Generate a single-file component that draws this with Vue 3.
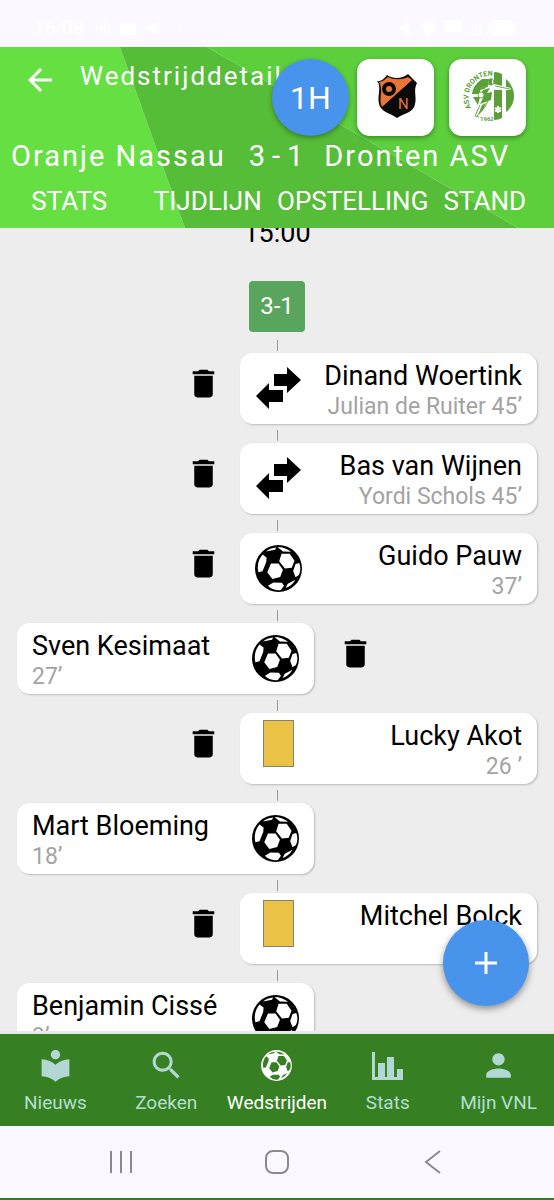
<script setup>
const tabs = ['STATS', 'TIJDLIJN', 'OPSTELLING', 'STAND']

const events = [
  { side: 'away', icon: 'swap', name: 'Dinand Woertink', detail: 'Julian de Ruiter 45’', removable: true },
  { side: 'away', icon: 'swap', name: 'Bas van Wijnen', detail: 'Yordi Schols 45’', removable: true },
  { side: 'away', icon: 'ball', name: 'Guido Pauw', detail: '37’', removable: true },
  { side: 'home', icon: 'ball', name: 'Sven Kesimaat', detail: '27’', removable: true },
  { side: 'away', icon: 'yellow', name: 'Lucky Akot', detail: '26 ’', removable: true },
  { side: 'home', icon: 'ball', name: 'Mart Bloeming', detail: '18’', removable: false },
  { side: 'away', icon: 'yellow', name: 'Mitchel Bolck', detail: '', removable: true },
  { side: 'home', icon: 'ball', name: 'Benjamin Cissé', detail: '9’', removable: false },
]

const ballPanels =
  'M47 54L69 54L82 73L74 94L51 100L36 80Z M78 26L102 26L116 46L108 67L88 69L71 48Z M32 19Q44 8 62 7L59 14Z M66 6Q88 6 106 20L82 19Z M22 28L34 37L33 50L22 77L10 80Q3 52 22 28Z M38 120L54 110L79 111L85 120L76 132Q54 136 38 120Z M119 56L130 53Q137 72 129 88L119 95L112 76Z M90 126L96 114L119 102Q108 120 90 126Z'

const destinations = [
  { label: 'Nieuws', icon: 'news' },
  { label: 'Zoeken', icon: 'search' },
  { label: 'Wedstrijden', icon: 'ball', active: true },
  { label: 'Stats', icon: 'stats' },
  { label: 'Mijn VNL', icon: 'person' },
]
</script>

<template>
  <div class="screen">
    <div class="status">
      <span class="clock">16:08</span>
      <svg class="status-left" viewBox="0 0 90 20" aria-hidden="true">
        <g fill="none" stroke="#fff" stroke-width="2"><path d="M2 8v4M6 5v10M10 3v14M14 6v8" /></g>
        <path d="M25 4h16v13H25zM48 11L66 3L62 17L56 13Z" fill="#fff" /><circle cx="84" cy="10" r="2" fill="#fff" />
      </svg>
      <svg class="status-right" viewBox="0 0 120 20" aria-hidden="true">
        <g fill="#fff"><path d="M2 7h4l6-5v16l-6-5H2zM31 2a6 6 0 0 0-6 6c0 5 6 11 6 11s6-6 6-11a6 6 0 0 0-6-6zM46 2h17v12H46zM69 14h2v4h-2zM73 11h2v7h-2zM77 7h2v11h-2zM81 3h2v15h-2z" /><rect x="90" y="2" width="28" height="16" rx="8" /></g>
      </svg>
    </div>

    <header class="header">
      <svg class="facets" viewBox="0 0 554 181" preserveAspectRatio="none" aria-hidden="true">
        <path d="M0 0H120L185 181H0Z" fill="#66df43" />
        <path d="M120 0H207L518 181H185Z" fill="#56bd38" />
        <path d="M207 0H554V181H518Z" fill="#5dcf3c" />
      </svg>
      <div class="bar">
        <button class="back" type="button" aria-label="Terug">
          <svg viewBox="0 0 24 24" width="36" height="36"><path d="M20 11H7.83l5.59-5.59L12 4l-8 8 8 8 1.41-1.41L7.83 13H20v-2z" fill="#fff" /></svg>
        </button>
        <h1>Wedstrijddetails</h1>
        <div class="actions">
          <button class="half" type="button">1H</button>
          <button class="crest" type="button" aria-label="Oranje Nassau">
            <svg viewBox="0 0 77 77" width="77" height="77">
              <path d="M20 22C24 23 28 19 30 16C36 20 45 20 51 15L60 24C56 31 60 38 58 45C57 53 48 54 40 59C33 54 24 53 22 45C20 36 25 28 20 22Z" fill="#090909" />
              <path d="M22 23C26 23 29 19 31 18C37 21 45 21 51 18L55 21L25 48C21 40 27 31 22 23Z" fill="#e87535" />
              <circle cx="32" cy="30" r="5" fill="none" stroke="#090909" stroke-width="4" />
              <text x="41" y="50" class="crest-n">N</text>
            </svg>
          </button>
          <button class="crest" type="button" aria-label="Dronten ASV">
            <svg viewBox="0 0 77 77" width="77" height="77">
              <defs><path id="crest-arc" d="M22 49A22 22 0 0 1 45 17" /></defs>
              <path d="M45 13Q50 13 53 15V59Q49 61 45 61ZM57 20Q65 27 65 37T57 53Z" fill="#5a9f38" />
              <path d="M23 35Q24 26 33 20L40 20L39 29L31 31L32 35ZM40 20L43 19V27L40 26ZM24 38H31L29 46Z" fill="#5a9f38" />
              <path d="M36 29L45 25L62 29L61 31L45 31L43 39L35 41L33 35Z" fill="#fff" />
              <path d="M34 31L41 29L38 34L43 33L42 41L31 45L34 39L31 37ZM33 46L37 44L34 51L29 56Z" fill="#5a9f38" />
              <g fill="none" stroke="#6ca94d" stroke-width="1"><circle cx="42" cy="23" r="3" /><circle cx="32" cy="36" r="3" fill="#fff" /><path d="M39 27L31 29M46 27L61 30M39 42L36 48L28 57M31 46L26 57L30 58" /></g>
              <path d="M49 47V54M46 49L52 52M46 52L52 49" stroke="#fff" stroke-width="2" />
              <text class="crest-ring"><textPath href="#crest-arc">ASV DRONTEN</textPath></text>
              <text x="31" y="62" class="crest-year">1962</text>
            </svg>
          </button>
        </div>
      </div>
      <div class="match"><span>Oranje Nassau</span><span class="score"><b>3</b><b>-</b><b>1</b></span><span>Dronten ASV</span></div>
      <nav class="tabs">
        <button v-for="t in tabs" :key="t" type="button">{{ t }}</button>
      </nav>
    </header>

    <div class="body">
      <main class="timeline">
        <p class="time">15:00</p>
        <p class="result">3-1</p>
        <ol>
          <li v-for="e in events" :key="e.name" :class="e.side">
            <article class="card">
              <svg v-if="e.icon === 'swap'" class="mark" viewBox="0 0 47 47" aria-hidden="true">
                <path d="M19 9H32V2L46 15L32 28V21H19ZM28 25H14V18L1 31L14 44V37H28Z" fill="#000" />
              </svg>
              <svg v-else-if="e.icon === 'ball'" class="mark" viewBox="0 0 138 138" aria-hidden="true">
                <circle cx="69" cy="69" r="69" fill="#000" /><path :d="ballPanels" fill="#fff" />
              </svg>
              <span v-else class="mark booking"><i></i></span>
              <div class="copy">
                <h2>{{ e.name }}</h2>
                <p>{{ e.detail }}</p>
              </div>
            </article>
            <button v-if="e.removable" class="trash" type="button" :aria-label="'Verwijder ' + e.name">
              <svg viewBox="0 0 24 24" width="37" height="37"><path d="M6 19c0 1.1.9 2 2 2h8c1.1 0 2-.9 2-2V7H6v12zM19 4h-3.5l-1-1h-5l-1 1H5v2h14V4z" /></svg>
            </button>
          </li>
        </ol>
      </main>
      <button class="fab" type="button" aria-label="Toevoegen">
        <svg viewBox="0 0 22 22" width="22" height="22"><path d="M11 0V22M0 11H22" stroke="#fff" stroke-width="3" /></svg>
      </button>
    </div>

    <nav class="bottom">
      <button v-for="d in destinations" :key="d.label" type="button" :class="{ active: d.active }">
        <svg v-if="d.icon === 'news'" viewBox="0 0 24 24" width="37" height="37"><path d="M12 11.55C9.64 9.35 6.48 8 3 8v11c3.48 0 6.64 1.35 9 3.55 2.36-2.19 5.52-3.55 9-3.55V8c-3.48 0-6.64 1.35-9 3.55zM12 8c1.66 0 3-1.34 3-3s-1.34-3-3-3-3 1.34-3 3 1.34 3 3 3z" /></svg>
        <svg v-else-if="d.icon === 'search'" viewBox="0 0 24 24" width="37" height="37"><path d="M15.5 14h-.79l-.28-.27C15.41 12.59 16 11.11 16 9.5 16 5.91 13.09 3 9.5 3S3 5.91 3 9.5 5.91 16 9.5 16c1.61 0 3.09-.59 4.23-1.57l.27.28v.79l5 4.99L20.49 19l-4.99-5zm-6 0C7.01 14 5 11.99 5 9.5S7.01 5 9.5 5 14 7.01 14 9.5 11.99 14 9.5 14z" /></svg>
        <svg v-else-if="d.icon === 'ball'" viewBox="-14 -14 166 166" width="37" height="37"><circle cx="69" cy="69" r="69" /><path :d="ballPanels" class="cut" /></svg>
        <svg v-else-if="d.icon === 'stats'" viewBox="0 0 37 37" width="37" height="37"><path d="M3 5H6V30H9V16H16V30H18V10H25V30H28V22H34V33H3Z" /></svg>
        <svg v-else viewBox="0 0 24 24" width="37" height="37"><path d="M12 12c2.21 0 4-1.79 4-4s-1.79-4-4-4-4 1.79-4 4 1.79 4 4 4zm0 2c-2.67 0-8 1.34-8 4v2h16v-2c0-2.66-5.33-4-8-4z" /></svg>
        <span>{{ d.label }}</span>
      </button>
    </nav>

    <div class="system">
      <button type="button" aria-label="Recente apps"><svg viewBox="0 0 26 26" width="26" height="26"><path d="M3 2V24M13 2V24M23 2V24" /></svg></button>
      <button type="button" aria-label="Startscherm"><svg viewBox="0 0 26 26" width="26" height="26"><rect x="2" y="2" width="22" height="22" rx="7" /></svg></button>
      <button type="button" aria-label="Vorige"><svg viewBox="0 0 26 26" width="26" height="26"><path d="M20 2L6 13L20 24" /></svg></button>
    </div>
  </div>
</template>

<style>
body { background: #ededed; }
</style>

<style scoped>
* { box-sizing: border-box; margin: 0; padding: 0; }
.screen { display: flex; flex-direction: column; height: 100vh; overflow: hidden; font-family: Roboto, "Liberation Sans", sans-serif; color: #000; background: #ededed; border-bottom: 2px solid #367c22; }
button { font: inherit; color: inherit; background: none; border: 0; }
svg { display: block; flex: none; }

.status { display: flex; align-items: center; height: 47px; padding: 8px 36px 0 33px; background: #fcf8ff; color: #fff; }
.clock { font-size: 20px; font-weight: 700; }
.status-left { width: 90px; height: 20px; margin-left: 10px; }
.status-right { width: 120px; height: 20px; margin-left: auto; }

.header { position: relative; flex: none; color: #fff; }
.facets { position: absolute; inset: 0; width: 100%; height: 100%; }
.bar { position: relative; display: flex; align-items: flex-start; padding: 12px 28px 0 22px; }
.back { margin-top: 3px; }
.bar h1 { flex: 1; min-width: 0; margin-left: 22px; font-size: 26px; font-weight: 400; line-height: 34px; letter-spacing: 2px; white-space: nowrap; }
.actions { display: flex; gap: 15px; position: relative; }
.half { width: 77px; height: 77px; margin-right: -7px; border-radius: 50%; background: #4894ec; font-size: 32px; box-shadow: 0 2px 5px rgba(0, 0, 0, .35); }
.crest { width: 77px; height: 77px; border-radius: 13px; background: #fff; box-shadow: 0 2px 5px rgba(0, 0, 0, .35); }
.crest-n { font: 15px Roboto, sans-serif; fill: #e87535; }
.crest-ring { font: 700 7px Roboto, sans-serif; fill: #5a9f38; }
.crest-year { font: 700 6px Roboto, sans-serif; fill: #5a9f38; }
.match { position: relative; display: flex; padding: 2px 11px 0; font-size: 29px; line-height: 36px; letter-spacing: 2px; white-space: nowrap; }
.score { display: flex; gap: 5px; margin: 0 19px 0 23px; }
.score b { font-weight: 400; }
.tabs { position: relative; display: flex; padding: 4px 0; }
.tabs button { flex: 1 1 0; min-width: 0; font-size: 26px; line-height: 46px; text-align: center; white-space: nowrap; }

.body { position: relative; flex: 1; min-height: 0; }
.timeline { height: 100%; overflow-y: auto; scrollbar-width: none; }
.time { margin-top: -9px; font-size: 27px; line-height: 28px; text-align: center; }
.result { width: 56px; margin: 34px auto 21px; border-radius: 4px; background: #59a55d; color: #fff; font-size: 24px; line-height: 51px; text-align: center; }
ol { display: flex; flex-direction: column; gap: 19px; padding: 0 17px 19px; list-style: none; }
li { position: relative; display: flex; align-items: center; }
li::before { content: ""; position: absolute; top: -13px; left: 50%; width: 1px; height: 11px; background: #999; }
.away { flex-direction: row-reverse; }
.card { display: flex; align-items: center; width: calc(57% + 1px); height: 71px; padding: 0 15px; border-radius: 13px; background: #fff; box-shadow: 1px 1px 2px rgba(0, 0, 0, .22); }
.home .card { flex-direction: row-reverse; }
.mark { flex: none; width: 47px; height: 47px; }
.booking { display: flex; justify-content: center; margin-bottom: 10px; }
.booking i { width: 31px; border: 1px solid #85807a; background: #e9c246; }
.copy { flex: 1; min-width: 0; height: 66px; white-space: nowrap; }
.away .copy { text-align: right; }
h2 { font-size: 27px; font-weight: 400; line-height: 34px; padding-top: 3px; }
.copy p { color: #a3a3a3; font-size: 23px; line-height: 28px; }
.trash { margin: 0 18px 10px; }
.home .trash { margin-left: 23px; }
.fab { position: absolute; right: 25px; bottom: 25px; display: grid; place-items: center; width: 86px; height: 86px; border-radius: 50%; background: #4894ec; box-shadow: 0 3px 7px rgba(0, 0, 0, .4); }

.bottom { display: flex; flex: none; height: 95px; border-top: 3px solid #e6ebe4; background: #367f22; color: #b2dfcf; }
.bottom button { display: flex; flex: 1 1 0; flex-direction: column; align-items: center; min-width: 0; padding-top: 13px; font-size: 19px; line-height: 38px; white-space: nowrap; }
.bottom svg { fill: #b2d8d4; }
.bottom .active { color: #fff; }
.bottom .active svg { fill: #fff; }
.bottom .active .cut { fill: #367f22; }

.system { display: flex; flex: none; justify-content: center; gap: 130px; height: 72px; background: #fcf8ff; }
.system button { display: grid; place-items: center; width: 26px; }
.system svg { fill: none; stroke: #8d888f; stroke-width: 2; }
</style>
